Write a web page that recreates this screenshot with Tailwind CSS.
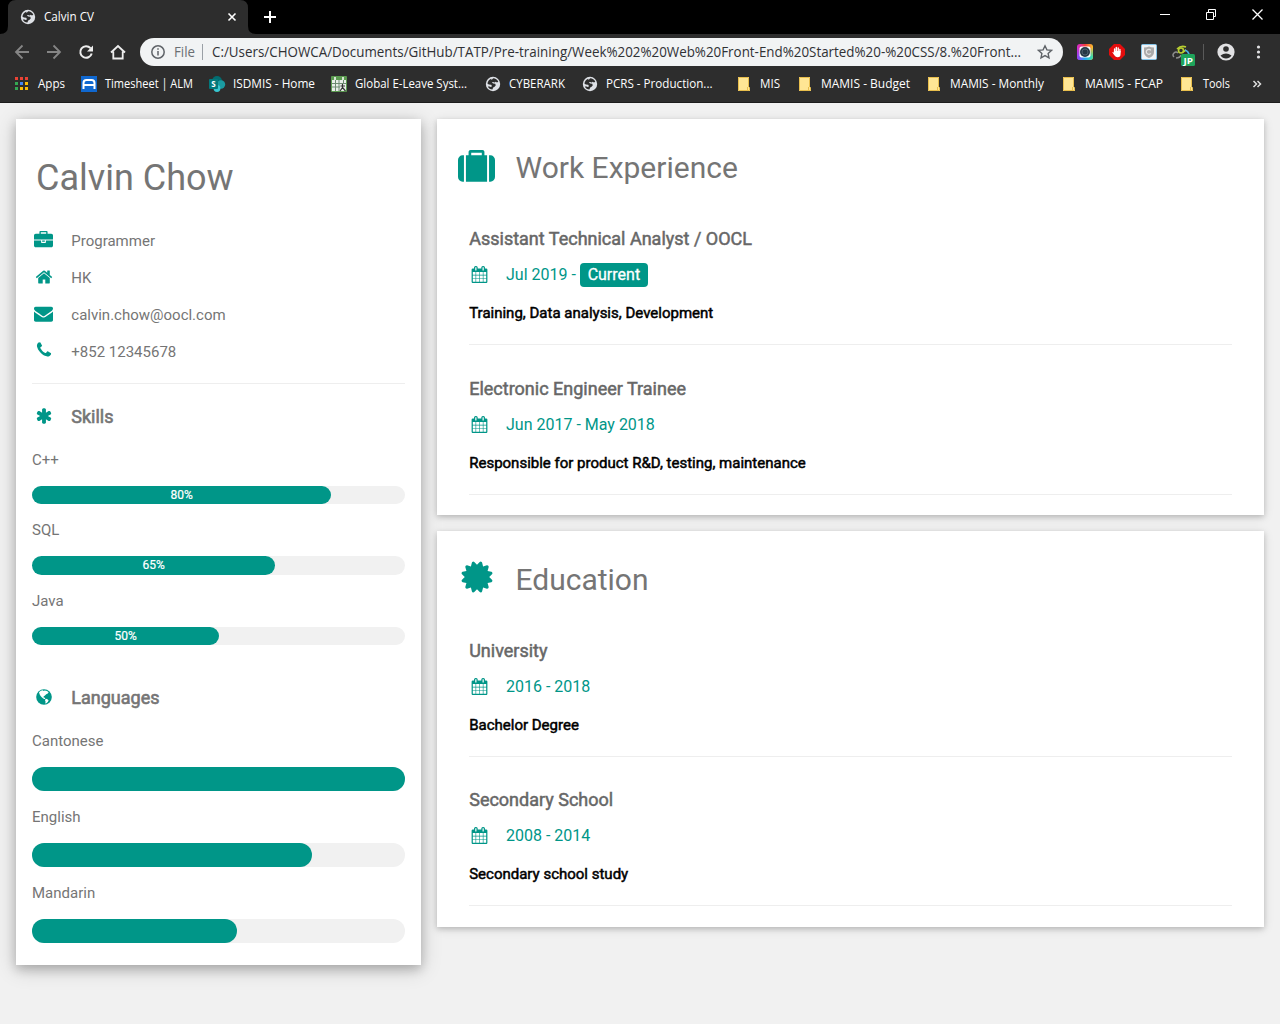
<!DOCTYPE html>
<html lang="en">
<head>
<meta charset="utf-8">
<title>Calvin CV</title>
<script src="https://cdn.jsdelivr.net/npm/@tailwindcss/browser@4"></script>
</head>
<body class="h-[1024px] w-[1280px] overflow-hidden bg-[#f1f1f1] font-[Roboto,sans-serif] text-[15px] text-[#757575]">
<svg class="hidden">
  <symbol id="briefcase" viewBox="0 0 1792 1792"><path d="M640 256h512v-128h-512v128zm1152 640v480q0 66-47 113t-113 47h-1472q-66 0-113-47t-47-113v-480h672v160q0 26 19 45t45 19h320q26 0 45-19t19-45v-160h672zm-768 0v128h-256v-128h256zm768-480v384h-1792v-384q0-66 47-113t113-47h352v-160q0-40 28-68t68-28h576q40 0 68 28t28 68v160h352q66 0 113 47t47 113z"/></symbol>
  <symbol id="home" viewBox="0 0 1792 1792"><path d="M1472 992v480q0 26-19 45t-45 19h-384v-384h-256v384h-384q-26 0-45-19t-19-45v-480q0-1 .5-3t.5-3l575-474 575 474q1 2 1 6zm223-69l-62 74q-8 9-21 11h-3q-13 0-21-7l-692-577-692 577q-12 8-24 7-13-2-21-11l-62-74q-8-10-7-23.5t11-21.5l719-599q32-26 76-26t76 26l244 204v-195q0-14 9-23t23-9h192q14 0 23 9t9 23v408l219 182q10 8 11 21.5t-7 23.5z"/></symbol>
  <symbol id="envelope" viewBox="0 0 1792 1792"><path d="M1792 710v794q0 66-47 113t-113 47h-1472q-66 0-113-47t-47-113v-794q44 49 101 87 362 246 497 345 57 42 92.5 65.5t94.5 48 110 24.5h2q51 0 110-24.5t94.5-48 92.5-65.5q170-123 498-345 57-39 100-87zm0-294q0 79-49 151t-122 123q-376 261-468 325-10 7-42.5 31t-54 38.5-52 32.5-57.5 27-50 9h-2q-23 0-50-9t-57.5-27-52-32.5-54-38.5-42.5-31q-91-64-262-182.5t-205-142.5q-62-42-117-115.5t-55-136.5q0-78 41.5-130t118.5-52h1472q65 0 112.5 47t47.5 113z"/></symbol>
  <symbol id="phone" viewBox="0 0 1792 1792"><path d="M1600 1240q0 27-10 70.5t-21 68.5q-21 50-122 106-94 51-186 51-27 0-53-3.5t-57.5-12.5-47-14.5-55.5-20.5-49-18q-98-35-175-83-127-79-264-216t-216-264q-48-77-83-175-3-9-18-49t-20.5-55.5-14.5-47-12.5-57.5-3.5-53q0-92 51-186 56-101 106-122 25-11 68.5-21t70.5-10q14 0 21 3 18 6 53 76 11 19 30 54t35 63.5 31 53.5q3 4 17.5 25t21.5 35.5 7 28.5q0 20-28.5 50t-62 55-62 53-28.5 46q0 9 5 22.5t8.5 20.5 14 24 11.5 19q76 137 174 235t235 174q2 1 19 11.5t24 14 20.5 8.5 22.5 5q18 0 46-28.5t53-62 55-62 50-28.5q14 0 28.5 7t35.5 21.5 25 17.5q25 15 53.5 31t63.5 35 54 30q70 35 76 53 3 7 3 21z"/></symbol>
  <symbol id="asterisk" viewBox="0 0 1792 1792"><path d="M1546 1050q46 26 59.5 77.5t-12.5 97.5l-64 110q-26 46-77.5 59.5t-97.5-12.5l-266-153v307q0 52-38 90t-90 38h-128q-52 0-90-38t-38-90v-307l-266 153q-46 26-97.5 12.5t-77.5-59.5l-64-110q-26-46-12.5-97.5t59.5-77.5l266-154-266-154q-46-26-59.5-77.5t12.5-97.5l64-110q26-46 77.5-59.5t97.5 12.5l266 153v-307q0-52 38-90t90-38h128q52 0 90 38t38 90v307l266-153q46-26 97.5-12.5t77.5 59.5l64 110q26 46 12.5 97.5t-59.5 77.5l-266 154z"/></symbol>
  <symbol id="suitcase" viewBox="0 0 1792 1792"><path d="M640 256h512v-128h-512v128zm-352 0v1280h-64q-92 0-158-66t-66-158v-832q0-92 66-158t158-66h64zm1120 0v1280h-1024v-1280h128v-160q0-40 28-68t68-28h576q40 0 68 28t28 68v160h128zm384 224v832q0 92-66 158t-158 66h-64v-1280h64q92 0 158 66t66 158z"/></symbol>
  <symbol id="certificate" viewBox="0 0 1792 1792"><path d="M1504 896l138 135q30 28 20 70-12 41-52 51l-188 48 53 186q12 41-19 70-29 31-70 19l-186-53-48 188q-10 40-51 52-12 2-19 2-31 0-51-22l-135-138-135 138q-28 30-70 20-41-11-51-52l-48-188-186 53q-41 12-70-19-31-29-19-70l53-186-188-48q-40-10-52-51-10-42 20-70l138-135-138-135q-30-28-20-70 12-41 52-51l188-48-53-186q-12-41 19-70 29-31 70-19l186 53 48-188q10-41 51-51 41-12 70 19l135 139 135-139q29-30 70-19 41 10 51 51l48 188 186-53q41-12 70 19 31 29 19 70l-53 186 188 48q40 10 52 51 10 42-20 70z"/></symbol>
  <symbol id="calendar" viewBox="0 0 1792 1792"><path d="M192 1664h288v-288h-288v288zm352 0h320v-288h-320v288zm-352-352h288v-320h-288v320zm352 0h320v-320h-320v320zm-352-384h288v-288h-288v288zm736 736h320v-288h-320v288zm-384-736h320v-288h-320v288zm768 736h288v-288h-288v288zm-384-352h320v-320h-320v320zm-352-864v-288q0-13-9.5-22.5t-22.5-9.5h-64q-13 0-22.5 9.500t-9.500 22.500v288q0 13 9.500 22.500t22.500 9.500h64q13 0 22.500-9.500t9.500-22.500zm736 864h288v-320h-288v320zm-384-384h320v-288h-320v288zm384 0h288v-288h-288v288zm32-480v-288q0-13-9.500-22.500t-22.500-9.500h-64q-13 0-22.500 9.500t-9.500 22.500v288q0 13 9.500 22.500t22.500 9.500h64q13 0 22.500-9.500t9.500-22.500zm384-64v1280q0 52-38 90t-90 38h-1408q-52 0-90-38t-38-90v-1280q0-52 38-90t90-38h128v-96q0-66 47-113t113-47h64q66 0 113 47t47 113v96h384v-96q0-66 47-113t113-47h64q66 0 113 47t47 113v96h128q52 0 90 38t38 90z"/></symbol>
  <symbol id="globe" viewBox="0 0 16 16"><circle cx="8" cy="8" r="7.8" fill="currentColor"/><path fill="#fff" d="M3 3.200 4.800 1.700 6.800 1.200 7.600 2 8.800 1.400 11 2 12.600 3.200 11.800 4.600 10.200 5.200 9 6.600 7.800 7.200 7.400 8.200 8.800 8.800 9.200 10 8 10 6 8.600 4.600 7 3.600 5.200zM9.600 9.800 11 10 12.600 11.200 12 12.800 10.400 14.200 9.200 14.600 9.600 12.800 9 11.400z"/></symbol>
  <symbol id="site" viewBox="0 0 16 16"><circle cx="8" cy="8" r="7.200" fill="#dee1e6"/><path fill="#2d2d2d" d="M8.200 2.300C10.400 2.400 12.400 3.700 13.300 5.800L12 6.400 10.600 5.800 9.800 6.600 8 6 6.800 6.600 8.200 7.600 10.200 7.800 10.800 9.200 9.600 10.800 8.200 11.400 7.400 13.600C5.400 13.400 3.600 12.200 2.800 10.400L4.600 10.400 5.800 11 7 10.200 6.200 8.800 3.800 8.600 2.400 7.600C2.800 5.400 4.200 3.400 6.200 2.800L6.600 4z"/></symbol>
  <symbol id="folder" viewBox="0 0 12 14"><path fill="#ffe694" d="M0 0h11v10l1 1v3H0z"/><path fill="none" stroke="#e8be4c" d="M.5.5h10v9.500M11.500 10.500v3H.5V.5M9.500 10v3.500"/></symbol>
</svg>

<header class="h-[103px] border-b border-[#1c1c1c] bg-[#2d2d2d] font-['Open_Sans',sans-serif] text-[12px] text-white">
  <!-- Tab strip -->
  <div class="flex h-[34px] items-start bg-black">
    <svg class="h-[34px] w-[256px] shrink-0" viewBox="0 0 256 34"><path fill="#2d2d2d" d="M0 34Q8 34 8 26V8Q8 0 16 0H240Q248 0 248 8V26Q248 34 256 34z"/><use href="#site" x="20" y="9" width="16" height="16"/><text x="44" y="21" fill="#fff" textLength="50" lengthAdjust="spacingAndGlyphs">Calvin CV</text><path d="M228.500 13.500l7 7m0-7l-7 7" stroke="#fff" stroke-width="1.600"/></svg>
    <svg class="ml-[7px] mt-[10px] size-[14px]" viewBox="0 0 14 14"><path d="M7 1v12M1 7h12" stroke="#fff" stroke-width="2"/></svg>
    <svg class="ml-auto mr-[16px] mt-[8px] h-[13px] w-[104px]" viewBox="0 0 104 13" fill="none" stroke="#fff"><path d="M0 6.500h10M46.500 4.500h7v7h-7zM48.500 4.500v-3h7v7h-2"/><path stroke-width="1.300" d="M92.500 1.500l10 10m0-10l-10 10"/></svg>
  </div>
  <!-- Toolbar -->
  <div class="flex h-[36px] items-center">
    <svg class="ml-[14px] h-[16px] w-[114px]" viewBox="14 0 114 16" fill="none" stroke-width="1.800"><g stroke="#858585"><path d="M29 8H16.500M22.500 1.500L16 8l6.500 6.500M47 8h12.500M53.500 1.500L60 8l-6.500 6.500"/></g><path stroke="#eee" stroke-width="2" d="M90.500 4.200A5.800 5.800 0 1 0 91.700 9.500"/><path fill="#eee" d="M93 1.500v6h-6z"/><path stroke="#eee" d="M111 8.500L118 2l7 6.500M113.300 7.500v7h9.400v-7"/></svg>
    <div class="ml-[12px] flex h-[28px] w-[923px] items-center rounded-full bg-[#f1f3f4] text-[14px] text-[#303134]">
      <svg class="ml-[11px] size-[14px]" viewBox="0 0 14 14" fill="none" stroke="#5f6368" stroke-width="1.500"><circle cx="7" cy="7" r="6.200"/><path d="M7 6v4.500M7 3.300v1.500"/></svg>
      <svg class="ml-[9px] h-[28px] w-[850px] overflow-visible" viewBox="0 0 850 28"><text x="0" y="19" fill="#6b6f73" textLength="21" lengthAdjust="spacingAndGlyphs">File</text><path d="M28.500 6v16" stroke="#9aa0a6"/><text x="38" y="19" fill="#303134" textLength="809" lengthAdjust="spacingAndGlyphs">C:/Users/CHOWCA/Documents/GitHub/TATP/Pre-training/Week%202%20Web%20Front-End%20Started%20-%20CSS/8.%20Front...</text></svg>
      <svg class="ml-[13px] size-[16px]" viewBox="0 0 16 16" fill="none" stroke="#5f6368" stroke-width="1.400"><path d="M8 1.800l1.900 4.100 4.500.5-3.300 3 .9 4.400L8 11.600l-4 2.200.9-4.400-3.300-3 4.500-.5z"/></svg>
    </div>
    <svg class="ml-[13px] h-[27px] w-[192px]" viewBox="0 0 192 27">
      <defs>
        <linearGradient id="rb" x1="0" y1="0" x2="1" y2="0"><stop offset="0" stop-color="#d52ad8"/><stop offset=".5" stop-color="#f33b3b"/><stop offset="1" stop-color="#ffc52e"/></linearGradient>
        <linearGradient id="rb2" x1="0" y1="0" x2="1" y2="0"><stop offset="0" stop-color="#9b3bf5"/><stop offset=".5" stop-color="#23aaf2"/><stop offset="1" stop-color="#41e0a0"/></linearGradient>
        <linearGradient id="fade" x1="0" y1="0" x2="0" y2="1"><stop offset=".2" stop-color="#fff" stop-opacity="0"/><stop offset=".8" stop-color="#fff"/></linearGradient>
        <mask id="lower"><rect x="1" y="5" width="16" height="16" fill="url(#fade)"/></mask>
      </defs>
      <rect x="1" y="5" width="16" height="16" rx="3" fill="url(#rb)"/><rect x="1" y="5" width="16" height="16" rx="3" fill="url(#rb2)" mask="url(#lower)"/><rect x="3.500" y="7.500" width="11" height="11" rx="2" fill="#fff"/><circle cx="9" cy="13" r="5" fill="#263846"/><circle cx="9" cy="13" r="3" fill="none" stroke="#4d5f6e"/>
      <path fill="#e40d0d" d="M38 5h6l5 5v6l-5 5h-6l-5-5v-6z"/><path d="M38.600 13V10M40.300 12V8.500M42.200 12V9M43.900 13v-2.500" stroke="#fff" stroke-width="1.400" stroke-linecap="round"/><path fill="#fff" d="M37.900 12h6.700v3q0 3.300-3 3.300-2 0-3.300-2l-2-3q1-.8 1.600.7z"/>
      <rect x="65.500" y="5.500" width="15" height="15" rx="1" fill="#f1f3f5" stroke="#85c4e8"/><path fill="#aaa" d="M68 8.500q3 0 5-1 2 1 5 1v4.500q0 4-5 6-5-2-5-6z"/><path d="M74.800 11.300a2.500 2.500 0 1 0 0 3" fill="none" stroke="#e5e5e5" stroke-width="1.200"/>
      <g fill="none"><path d="M98 18q-2-2 0-4t4 0M100 19q4 0 5-3" stroke="#8d8d8d" stroke-width="1.500"/><path d="M101 10q4-4 9-2M107 13l3-2" stroke="#b8cf32" stroke-width="1.600"/><circle cx="105" cy="11.500" r="2.500" stroke="#b8cf32" stroke-width="1.600"/><path d="M109 11q3 1 4 4" stroke="#4daee8" stroke-width="1.800"/></g>
      <rect x="105" y="15" width="14" height="12" rx="1.500" fill="#1ea45b"/><text x="107.500" y="24.500" fill="#fff" font-size="9" font-weight="700" textLength="9.500" lengthAdjust="spacingAndGlyphs">JP</text>
      <path d="M127.500 5v16" stroke="#5a5a5a"/>
      <circle cx="150" cy="13" r="8.600" fill="#e1e1e3"/><circle cx="150" cy="10" r="2.800" fill="#2d2d2d"/><path fill="#2d2d2d" d="M144.500 16.500q5.500-4 11 0-2 3-5.500 3t-5.500-3z"/>
      <g fill="#e1e1e3"><circle cx="182.500" cy="8" r="1.600"/><circle cx="182.500" cy="13" r="1.600"/><circle cx="182.500" cy="18" r="1.600"/></g>
    </svg>
  </div>
  <!-- Bookmarks bar -->
  <svg class="h-[28px] w-[1280px]" viewBox="0 0 1280 28" fill="#fff">
    <g><path fill="#ea4335" d="M15 7h3v3h-3zM20 7h3v3h-3zM25 7h3v3h-3z"/><path fill="#34a853" d="M15 12h3v3h-3zM15 17h3v3h-3z"/><path fill="#4285f4" d="M20 12h3v3h-3z"/><path fill="#fbbc05" d="M25 12h3v3h-3zM20 17h3v3h-3zM25 17h3v3h-3z"/></g>
    <text x="38" y="18" textLength="27" lengthAdjust="spacingAndGlyphs">Apps</text>
    <rect x="81" y="6" width="16" height="16" fill="#1068d0"/><path d="M83.500 19v-6q0-3 3-3h5q3 0 3 3v6M84 15h10" fill="none" stroke="#fff" stroke-width="2"/>
    <text x="105" y="18" textLength="88" lengthAdjust="spacingAndGlyphs">Timesheet | ALM</text>
    <circle cx="217" cy="11" r="5" fill="#036c70"/><circle cx="221" cy="14.500" r="4.200" fill="#1a9ba1"/><circle cx="217" cy="18.500" r="3.400" fill="#37c6d0"/><rect x="209" y="9" width="9" height="10" rx="1" fill="#03787c"/><text x="211.300" y="17" font-size="8" font-weight="700">S</text>
    <text x="233" y="18" textLength="82" lengthAdjust="spacingAndGlyphs">ISDMIS - Home</text>
    <rect x="331" y="6" width="16" height="16" rx="1" fill="#5b9a50"/><rect x="332" y="10" width="14" height="11" fill="#e8eee8"/><path d="M332 13.500h14M332 17h8M335.500 10v11M339 10v11M343.500 10v3" stroke="#6e8b72"/><path d="M335 7v3M343 7v3" stroke="#fff" stroke-width="1.500"/><path d="M342.500 14v3.500l-2.500 3.500m2.500-3.500l3 3.500M340.500 16h4.500" stroke="#333" fill="none" stroke-width="1.200"/>
    <text x="355" y="18" textLength="112" lengthAdjust="spacingAndGlyphs">Global E-Leave Syst...</text>
    <use href="#site" x="485" y="6" width="16" height="16"/><text x="509" y="18" textLength="56" lengthAdjust="spacingAndGlyphs">CYBERARK</text>
    <use href="#site" x="582" y="6" width="16" height="16"/><text x="606" y="18" textLength="106.500" lengthAdjust="spacingAndGlyphs">PCRS - Production...</text>
    <use href="#folder" x="738" y="7" width="12" height="14"/><text x="760" y="18" textLength="20" lengthAdjust="spacingAndGlyphs">MIS</text>
    <use href="#folder" x="799" y="7" width="12" height="14"/><text x="821" y="18" textLength="89" lengthAdjust="spacingAndGlyphs">MAMIS - Budget</text>
    <use href="#folder" x="928" y="7" width="12" height="14"/><text x="950" y="18" textLength="94" lengthAdjust="spacingAndGlyphs">MAMIS - Monthly</text>
    <use href="#folder" x="1063" y="7" width="12" height="14"/><text x="1085" y="18" textLength="78" lengthAdjust="spacingAndGlyphs">MAMIS - FCAP</text>
    <use href="#folder" x="1181" y="7" width="12" height="14"/><text x="1203" y="18" textLength="27" lengthAdjust="spacingAndGlyphs">Tools</text>
    <path d="M1253.500 11l3 3-3 3M1257.500 11l3 3-3 3" fill="none" stroke="#ddd" stroke-width="1.500"/>
  </svg>
</header>

<main class="flex items-start gap-4 p-4">
  <aside class="h-[846px] w-[405px] shrink-0 bg-white px-4 pt-[34px] shadow-[0_4px_10px_0_rgba(0,0,0,0.2),0_4px_20px_0_rgba(0,0,0,0.19)]">
    <h1 class="mb-[20px] h-[50px] pl-[4px] text-[36px] leading-[50px]">Calvin Chow</h1>
    <ul>
      <li class="flex h-[37px] items-center"><svg class="mb-[2px] ml-[2px] mr-[18.300px] size-[19px] fill-[#009688]"><use href="#briefcase"/></svg>Programmer</li>
      <li class="flex h-[37px] items-center"><svg class="mb-[3px] ml-[3px] mr-[18.300px] size-[18px] fill-[#009688]"><use href="#home"/></svg>HK</li>
      <li class="flex h-[37px] items-center"><svg class="mb-[4px] ml-[2px] mr-[18.300px] size-[19px] fill-[#009688]"><use href="#envelope"/></svg>calvin.chow@oocl.com</li>
      <li class="flex h-[37px] items-center"><svg class="mb-[5px] ml-[3px] mr-[18.300px] size-[18px] fill-[#009688]"><use href="#phone"/></svg>+852 12345678</li>
    </ul>
    <hr class="mt-[12px] border-[#eee]">
    <h2 class="mt-[19px] flex h-[27px] items-center text-[18px] [-webkit-text-stroke:0.6px_#757575]"><svg class="mb-[1px] ml-[3px] mr-[18.300px] size-[18px] fill-[#009688] [stroke:none]"><use href="#asterisk"/></svg>Skills</h2>
    <div class="mt-[18.500px] leading-[22.500px]">
      <div class="h-[70px]"><p class="mb-[15px]">C++</p><div class="rounded-full bg-[#f1f1f1]"><div class="h-[18px] rounded-full bg-[#009688] text-center text-[12px] leading-[18px] text-white [-webkit-text-stroke:0.2px_#fff]" style="width:80.200%">80%</div></div></div>
      <div class="h-[71px]"><p class="mb-[15px]">SQL</p><div class="rounded-full bg-[#f1f1f1]"><div class="h-[18.500px] rounded-full bg-[#009688] text-center text-[12px] leading-[18px] text-white [-webkit-text-stroke:0.2px_#fff]" style="width:65.200%">65%</div></div></div>
      <div class="h-[70.500px]"><p class="mb-[15px]">Java</p><div class="rounded-full bg-[#f1f1f1]"><div class="h-[18px] rounded-full bg-[#009688] text-center text-[12px] leading-[18px] text-white [-webkit-text-stroke:0.2px_#fff]" style="width:50.200%">50%</div></div></div>
    </div>
    <h2 class="mt-[24px] flex h-[27px] items-center text-[18px] [-webkit-text-stroke:0.6px_#757575]"><svg class="mb-[1px] ml-[4px] mr-[19.300px] size-[16px] text-[#009688] [stroke:none]"><use href="#globe"/></svg>Languages</h2>
    <div class="mt-[18.500px] space-y-[14.500px] leading-[22.500px]">
      <div><p class="mb-[15px]">Cantonese</p><div class="rounded-full bg-[#f1f1f1]"><div class="h-[24px] rounded-full bg-[#009688]" style="width:100%"></div></div></div>
      <div><p class="mb-[15px]">English</p><div class="rounded-full bg-[#f1f1f1]"><div class="h-[24px] rounded-full bg-[#009688]" style="width:75%"></div></div></div>
      <div><p class="mb-[15px]">Mandarin</p><div class="rounded-full bg-[#f1f1f1]"><div class="h-[24px] rounded-full bg-[#009688]" style="width:55%"></div></div></div>
    </div>
  </aside>

  <div class="flex w-[827px] flex-col gap-4">
    <section class="h-[396px] bg-white pt-[26px] shadow-[0_2px_5px_0_rgba(0,0,0,0.16),0_2px_10px_0_rgba(0,0,0,0.12)]">
      <h2 class="flex h-[45px] items-center text-[30px]"><svg class="ml-[21px] mr-[20.500px] mt-[2px] size-[37px] fill-[#009688]"><use href="#suitcase"/></svg>Work Experience</h2>
      <article class="mx-8 mt-[35px]">
        <h3 class="h-[28px] pl-[0.200px] text-[18px] leading-[28px] text-[#676767] [-webkit-text-stroke:0.5px_#676767]">Assistant Technical Analyst / OOCL</h3>
        <div class="mt-[10px] flex h-[24px] items-center text-[16px] text-[#009688]"><svg class="mb-[1px] ml-[2px] mr-[18px] size-[17px] fill-[#009688]"><use href="#calendar"/></svg>Jul 2019 -<span class="ml-[4px] h-[24px] w-[68px] rounded-[4px] bg-[#009688] text-center leading-[23px] text-white [-webkit-text-stroke:0.3px_#fff]">Current</span></div>
        <p class="mt-[15px] h-[22px] pl-[0.200px] leading-[22px] text-black [-webkit-text-stroke:0.5px_#000]">Training, Data analysis, Development</p>
        <hr class="mt-[20px] border-[#eee]">
      </article>
      <article class="mx-8 mt-[30px]">
        <h3 class="h-[28px] pl-[0.200px] text-[18px] leading-[28px] text-[#676767] [-webkit-text-stroke:0.5px_#676767]">Electronic Engineer Trainee</h3>
        <div class="mt-[10px] flex h-[24px] items-center text-[16px] text-[#009688]"><svg class="mb-[1px] ml-[2px] mr-[18px] size-[17px] fill-[#009688]"><use href="#calendar"/></svg>Jun 2017 - May 2018</div>
        <p class="mt-[15px] h-[22px] pl-[0.200px] leading-[22px] text-black [-webkit-text-stroke:0.5px_#000]">Responsible for product R&amp;D, testing, maintenance</p>
        <hr class="mt-[20px] border-[#eee]">
      </article>
    </section>
    <section class="h-[396px] bg-white pt-[26px] shadow-[0_2px_5px_0_rgba(0,0,0,0.16),0_2px_10px_0_rgba(0,0,0,0.12)]">
      <h2 class="flex h-[45px] items-center text-[30px]"><svg class="mb-[5px] ml-[22px] mr-[20.500px] size-[36px] fill-[#009688]"><use href="#certificate"/></svg>Education</h2>
      <article class="mx-8 mt-[35px]">
        <h3 class="h-[28px] pl-[0.200px] text-[18px] leading-[28px] text-[#676767] [-webkit-text-stroke:0.5px_#676767]">University</h3>
        <div class="mt-[10px] flex h-[24px] items-center text-[16px] text-[#009688]"><svg class="mb-[1px] ml-[2px] mr-[18px] size-[17px] fill-[#009688]"><use href="#calendar"/></svg>2016 - 2018</div>
        <p class="mt-[15px] h-[22px] pl-[0.200px] leading-[22px] text-black [-webkit-text-stroke:0.5px_#000]">Bachelor Degree</p>
        <hr class="mt-[20px] border-[#eee]">
      </article>
      <article class="mx-8 mt-[29px]">
        <h3 class="h-[28px] pl-[0.200px] text-[18px] leading-[28px] text-[#676767] [-webkit-text-stroke:0.5px_#676767]">Secondary School</h3>
        <div class="mt-[10px] flex h-[24px] items-center text-[16px] text-[#009688]"><svg class="mb-[1px] ml-[2px] mr-[18px] size-[17px] fill-[#009688]"><use href="#calendar"/></svg>2008 - 2014</div>
        <p class="mt-[15px] h-[22px] pl-[0.200px] leading-[22px] text-black [-webkit-text-stroke:0.5px_#000]">Secondary school study</p>
        <hr class="mt-[20px] border-[#eee]">
      </article>
    </section>
  </div>
</main>
</body>
</html>
